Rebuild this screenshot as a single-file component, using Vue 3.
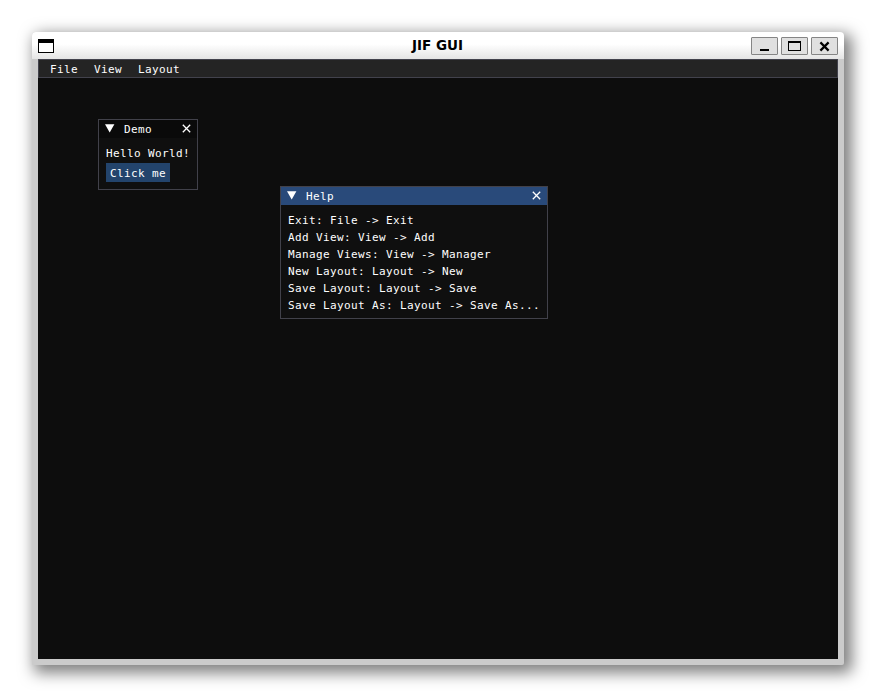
<script setup>
const menus = ['File', 'View', 'Layout']
const help = [
  'Exit: File -> Exit',
  'Add View: View -> Add',
  'Manage Views: View -> Manager',
  'New Layout: Layout -> New',
  'Save Layout: Layout -> Save',
  'Save Layout As: Layout -> Save As...',
]
</script>

<template>
  <div class="desktop">
    <div class="frame">
      <header class="titlebar">
        <svg class="app-icon" width="16" height="14" viewBox="0 0 16 14" shape-rendering="crispEdges">
          <rect width="16" height="14" fill="#000" />
          <rect x="1" y="4" width="14" height="9" fill="#fff" />
        </svg>
        <h1>JIF GUI</h1>
        <div class="controls">
          <button aria-label="Minimize">
            <svg width="25" height="16" viewBox="0 0 25 16" shape-rendering="crispEdges"><rect x="8" y="11" width="9" height="2" /></svg>
          </button>
          <button aria-label="Maximize">
            <svg width="25" height="16" viewBox="0 0 25 16" shape-rendering="crispEdges"><path fill-rule="evenodd" d="M6 3h13v10H6zM7 5v7h11V5z" /></svg>
          </button>
          <button aria-label="Close">
            <svg width="25" height="16" viewBox="0 0 25 16"><path d="M8.4 4.4l8.2 8.2M16.6 4.4l-8.2 8.2" stroke="#000" stroke-width="2.2" /></svg>
          </button>
        </div>
      </header>
      <main class="client">
        <nav class="menubar">
          <span v-for="m in menus" :key="m">{{ m }}</span>
        </nav>
        <section class="panel demo">
          <div class="panel-title">
            <svg class="arrow" width="10" height="9" viewBox="0 0 10 9"><path d="M0 .3h9.4L4.7 8.6z" fill="#fff" /></svg>
            <span>Demo</span>
            <svg class="close" width="9" height="9" viewBox="0 0 9 9"><path d="M.8.8l7.4 7.4M8.2.8L.8 8.2" stroke="#fff" stroke-width="1.3" /></svg>
          </div>
          <div class="panel-body">
            <div class="line">Hello World!</div>
            <button class="click">Click me</button>
          </div>
        </section>
        <section class="panel help">
          <div class="panel-title active">
            <svg class="arrow" width="10" height="9" viewBox="0 0 10 9"><path d="M0 .3h9.4L4.7 8.6z" fill="#fff" /></svg>
            <span>Help</span>
            <svg class="close" width="9" height="9" viewBox="0 0 9 9"><path d="M.8.8l7.4 7.4M8.2.8L.8 8.2" stroke="#fff" stroke-width="1.3" /></svg>
          </div>
          <div class="panel-body">
            <div v-for="l in help" :key="l" class="line">{{ l }}</div>
          </div>
        </section>
      </main>
    </div>
  </div>
</template>

<style>
body { margin: 0; background: #fff; }
</style>

<style scoped>
* { box-sizing: border-box; }
.desktop {
  width: 876px;
  height: 697px;
  padding: 32px;
  overflow: hidden;
  background: #fff;
}
.frame {
  width: 812px;
  height: 633px;
  background: #cbcbcb;
  border-radius: 4px 4px 2px 1px;
  box-shadow: 5px 5px 15px 3px rgba(0, 0, 0, 0.5);
}
.titlebar {
  display: grid;
  grid-template-columns: 100px 1fr 100px;
  align-items: center;
  height: 27px;
  padding: 0 6px;
  border-radius: 4px 4px 0 0;
  background: linear-gradient(#fff 0%, #fff 45%, #e4e4e4 100%);
}
.app-icon { display: block; margin-top: 1px; }
h1 {
  margin: 0 1px 0 0;
  font: bold 13.5px/27px "DejaVu Sans", sans-serif;
  text-align: center;
  color: #000;
}
.controls {
  display: flex;
  justify-content: flex-end;
  gap: 3px;
  margin-top: 1px;
}
.controls button {
  width: 27px;
  height: 18px;
  padding: 0;
  border: 1px solid #858585;
  border-radius: 1px;
  background: #e0e0e0;
}
.controls svg { display: block; }
.client {
  position: relative;
  width: 800px;
  height: 600px;
  margin-left: 6px;
  background: #0d0d0d;
  color: #fff;
  font-family: "DejaVu Sans Mono", monospace;
  font-size: 11px;
  letter-spacing: 0.378px;
  white-space: pre;
}
.menubar {
  display: flex;
  gap: 16px;
  height: 19px;
  padding-left: 11px;
  border: 1px solid #42424c;
  background: #242424;
  line-height: 19px;
}
.panel {
  position: absolute;
  border: 1px solid #41414a;
  background: #0f0f0f;
}
.demo { left: 60px; top: 60px; width: 100px; height: 71px; }
.help { left: 242px; top: 127px; width: 268px; height: 133px; }
.panel-title {
  display: flex;
  align-items: flex-start;
  height: 18px;
  padding: 0 6px;
  background: #0a0a0a;
}
.active { background: #294a7a; }
.arrow { margin: 4px 9px 0 0; }
.close { margin: 4px 0 0 auto; }
.panel-title span { line-height: 20px; }
.panel-body { padding: 7px 7px 0; }
.line { height: 17px; line-height: 17px; }
.click {
  display: block;
  width: 64px;
  height: 19px;
  margin-top: 1px;
  padding: 2px 0 0 4px;
  border: 0;
  background: #23446c;
  color: #fff;
  font: inherit;
  letter-spacing: inherit;
  line-height: 17px;
  text-align: left;
}
</style>
